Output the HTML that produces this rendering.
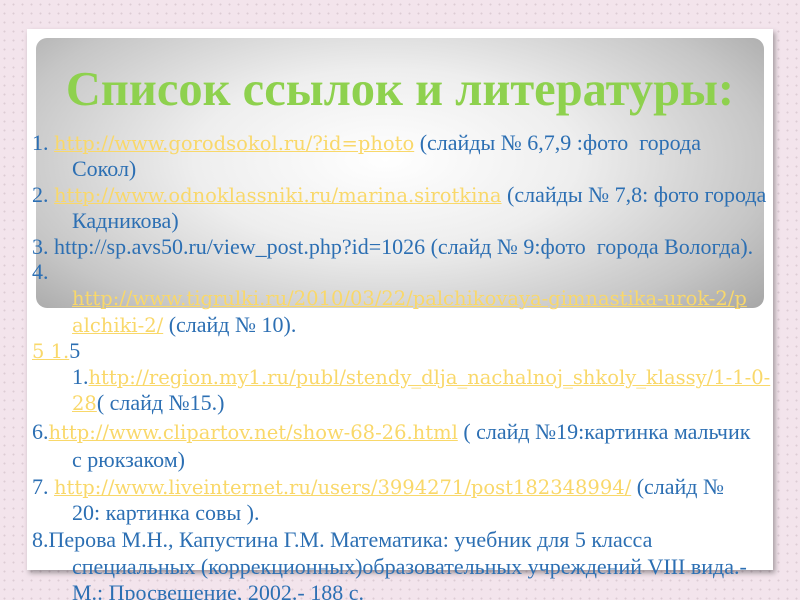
<!DOCTYPE html>
<html><head><meta charset="utf-8"><style>
html,body{margin:0;padding:0;width:800px;height:600px;overflow:hidden}
body{background-color:#f3e4ec;background-image:radial-gradient(circle,#dccbd4 0.8px,transparent 1.2px);background-size:9px 9px;position:relative;font-family:"Liberation Serif",serif}
.card{position:absolute;left:27px;top:29px;width:746px;height:541px;background:#fff;box-shadow:2px 3px 5px rgba(0,0,0,.35)}
.gray{position:absolute;left:36px;top:38px;width:728px;height:270px;border-radius:11px;background:radial-gradient(ellipse 75% 95% at 48% 45%,#ffffff 0%,#eeeeee 35%,#c6c6c6 70%,#969696 100%)}
h1{position:absolute;left:0;width:800px;top:62px;margin:0;text-align:center;font:bold 48.5px "Liberation Serif",serif;color:#8ed14e}
.l{position:absolute;left:32px;font-size:22px;line-height:26px;color:#2c6fb3;white-space:nowrap}
.i{left:72px}
a{color:#f9d86a;text-decoration:underline;font-family:"DejaVu Serif",serif;font-size:19.5px}
</style></head><body>
<div class="card"></div><div class="gray"></div>
<h1>Список ссылок и литературы:</h1>
<div class="l" style="top:130px">1. <a>http://www.gorodsokol.ru/?id=photo</a> (слайды № 6,7,9 :фото&nbsp; города</div>
<div class="l i" style="top:156px">Сокол)</div>
<div class="l" style="top:182px">2. <a>http://www.odnoklassniki.ru/marina.sirotkina</a> (слайды № 7,8: фото города</div>
<div class="l i" style="top:208px">Кадникова)</div>
<div class="l" style="top:234px">3. http://sp.avs50.ru/view_post.php?id=1026 (слайд № 9:фото&nbsp; города Вологда).</div>
<div class="l" style="top:259px">4.</div>
<div class="l i" style="top:285px"><a>http://www.tigrulki.ru/2010/03/22/palchikovaya-gimnastika-urok-2/p</a></div>
<div class="l i" style="top:312px"><a>alchiki-2/</a> (слайд № 10).</div>
<div class="l" style="top:338px"><a>5 1.</a>5</div>
<div class="l i" style="top:364px">1.<a>http://region.my1.ru/publ/stendy_dlja_nachalnoj_shkoly_klassy/1-1-0-</a></div>
<div class="l i" style="top:390px"><a>28</a>( слайд №15.)</div>
<div class="l" style="top:419px">6.<a>http://www.clipartov.net/show-68-26.html</a> ( слайд №19:картинка мальчик</div>
<div class="l i" style="top:447px">с рюкзаком)</div>
<div class="l" style="top:474px">7. <a>http://www.liveinternet.ru/users/3994271/post182348994/</a> (слайд №</div>
<div class="l i" style="top:500px">20: картинка совы ).</div>
<div class="l" style="top:527px">8.Перова М.Н., Капустина Г.М. Математика: учебник для 5 класса</div>
<div class="l i" style="top:554px">специальных (коррекционных)образовательных учреждений VIII вида.-</div>
<div class="l i" style="top:580px">М.: Просвещение, 2002.- 188 с.</div>
</body></html>
